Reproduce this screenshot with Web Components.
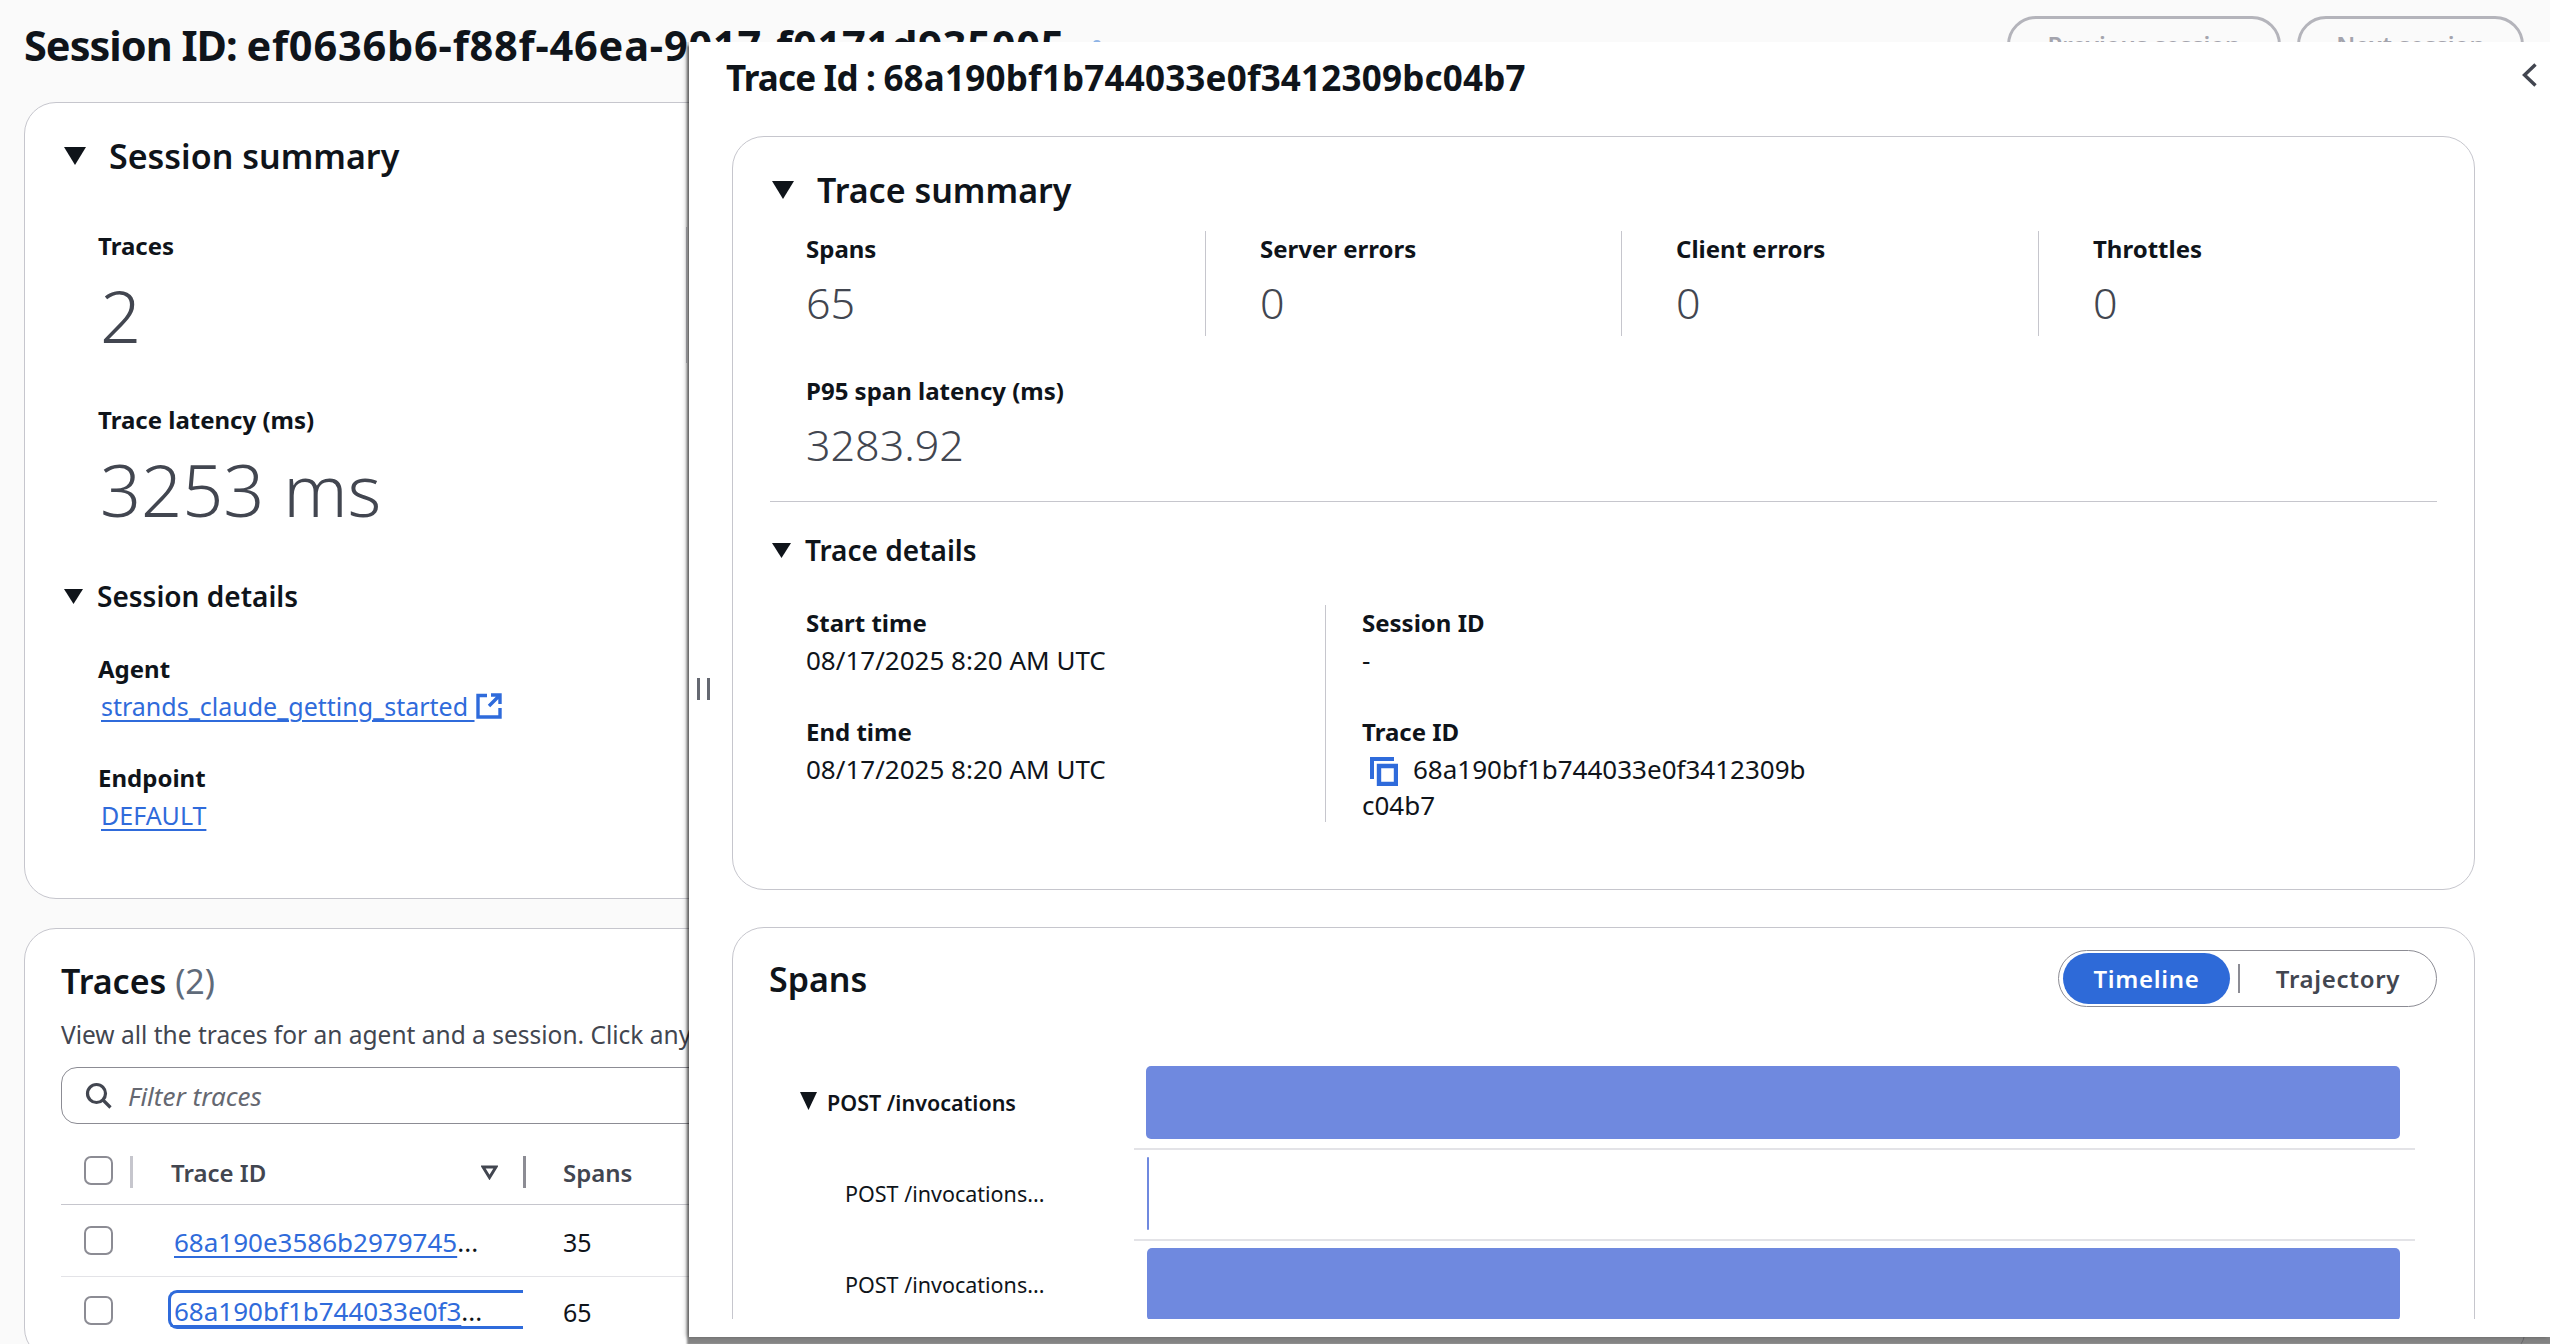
<!DOCTYPE html>
<html>
<head>
<meta charset="utf-8">
<title>Session</title>
<style>
    html, body { margin: 0; height: 100%; }
    body {
        width: 2550px;
        height: 1344px;
        overflow: hidden;
        position: relative;
        background: #fafafa;
        color: #0f141a;
        font-family: "Noto Sans", "Open Sans", sans-serif;
    }
    .stat-row { display: grid; grid-template-columns: 622px 1fr; }
    .stat-row i { display: block; margin: -3px 0 -6px; border-left: 1px solid #c6c6cd; }
</style>
</head>
<body>

<session-page>
    <session-header slot="header" label="Session ID: " value="ef0636b6-f88f-46ea-9017-f0171d935005"></session-header>

    <ui-card class="session">
        <fold-title size="lg">Session summary</fold-title>
        <div style="height:50px"></div>
        <div class="stat-row">
            <stat-item big>
                <span slot="label">Traces</span>
                2
            </stat-item>
            <i></i>
        </div>
        <div style="height:47px"></div>
        <stat-item big>
            <span slot="label">Trace latency (ms)</span>
            3253 ms
        </stat-item>
        <div style="height:45px"></div>
        <fold-title>Session details</fold-title>
        <div style="height:37px"></div>
        <kv-item indent="34">
            <span slot="label">Agent</span>
            <ui-link external>strands_claude_getting_started</ui-link>
        </kv-item>
        <div style="height:38px"></div>
        <kv-item indent="34">
            <span slot="label">Endpoint</span>
            <ui-link>DEFAULT</ui-link>
        </kv-item>
    </ui-card>

    <traces-panel></traces-panel>
</session-page>

<trace-drawer label="Trace Id : " value="68a190bf1b744033e0f3412309bc04b7">
    <trace-summary></trace-summary>
    <spans-panel></spans-panel>
</trace-drawer>

<script>
const triangle = `<svg viewBox="0 0 20 18" preserveAspectRatio="none" style="display:block;width:100%;height:100%"><path d="M0 0H20L10 18Z" fill="currentColor"/></svg>`;

class SessionPage extends HTMLElement {
    constructor() {
        super();
        this.attachShadow({ mode: 'open' });
        this.shadowRoot.innerHTML = `
            <style>
                :host { display: block; width: 2550px; height: 1344px; box-sizing: border-box; padding-left: 24px; overflow: hidden; }
                .stack { display: flex; flex-direction: column; gap: 29px; width: 2502px; }
            </style>
            <slot name="header"></slot>
            <div class="stack"><slot></slot></div>
        `;
    }
}

class SessionHeader extends HTMLElement {
    constructor() {
        super();
        this.attachShadow({ mode: 'open' });
        this.shadowRoot.innerHTML = `
            <style>
                :host { display: flex; height: 102px; padding-right: 26px; }
                h1 { margin: 21px 0 0; font-size: 41.5px; line-height: 48px; font-weight: 700; white-space: pre; letter-spacing: .8px; }
                h1 span { letter-spacing: -1px; }
                .info { width: 8px; height: 8px; border-radius: 50%; background: #8fb4e6; margin: 40px auto 0 28px; }
                .btns { display: flex; gap: 16px; padding-top: 16px; }
                button {
                    height: 58px; border: 3px solid #b4b4bb; border-radius: 30px; background: transparent;
                    color: #a4a4ad; font: 600 24px/32px "Noto Sans", sans-serif; padding: 0; box-sizing: border-box;
                }
                .prev { width: 274px; }
                .next { width: 227px; }
            </style>
            <h1><span>${this.getAttribute('label')}</span>${this.getAttribute('value')}</h1>
            <div class="info"></div>
            <div class="btns">
                <button class="prev">Previous session</button>
                <button class="next">Next session</button>
            </div>
        `;
    }
}

class UiCard extends HTMLElement {
    constructor() {
        super();
        this.attachShadow({ mode: 'open' });
        this.shadowRoot.innerHTML = `
            <style>
                :host {
                    display: block; box-sizing: border-box; background: #fff;
                    border: 1px solid #c6c6cd; border-radius: 32px;
                }
                :host(.session) { height: 797px; padding: 29px 39px 0; }
            </style>
            <slot></slot>
        `;
    }
}

class FoldTitle extends HTMLElement {
    constructor() {
        super();
        this.attachShadow({ mode: 'open' });
        this.shadowRoot.innerHTML = `
            <style>
                :host { display: flex; align-items: center; height: 40px; font-size: 28px; font-weight: 600; color: #0f141a; gap: 14px; }
                :host([size="lg"]) { height: 48px; font-size: 34px; gap: 23px; }
                i { display: block; width: 19px; height: 15px; }
                :host([size="lg"]) i { width: 22px; height: 18px; }
            </style>
            <i>${triangle}</i><span><slot></slot></span>
        `;
    }
}

class StatItem extends HTMLElement {
    constructor() {
        super();
        this.attachShadow({ mode: 'open' });
        this.shadowRoot.innerHTML = `
            <style>
                :host { display: block; padding-left: 34px; }
                :host([big]) .v { font-size: 72px; line-height: 84px; margin: 11px 0 0 2px; }
                :host([pad]) { padding-left: 0; }
                .l { font-size: 24px; line-height: 32px; font-weight: 700; color: #0f141a; }
                .v { font-size: 43px; line-height: 56px; margin-top: 10px; font-weight: 300; color: #424650; }
            </style>
            <div class="l"><slot name="label"></slot></div>
            <div class="v"><slot></slot></div>
        `;
    }
}

class KvItem extends HTMLElement {
    constructor() {
        super();
        this.attachShadow({ mode: 'open' });
        const indent = this.getAttribute('indent') || 0;
        this.shadowRoot.innerHTML = `
            <style>
                :host { display: block; padding-left: ${indent}px; font-size: 26px; }
                .l { font-size: 24px; line-height: 32px; font-weight: 700; }
                .v { line-height: 36px; margin-top: 3px; color: #0f141a; }
            </style>
            <div class="l"><slot name="label"></slot></div>
            <div class="v"><slot></slot></div>
        `;
    }
}

class UiLink extends HTMLElement {
    constructor() {
        super();
        this.attachShadow({ mode: 'open' });
        const ext = this.hasAttribute('external');
        this.shadowRoot.innerHTML = `
            <style>
                :host { display: inline-flex; align-items: center; margin-left: 3px; color: #2f6bdb; font-size: 25px; }
                a { color: inherit; text-decoration: underline; text-underline-offset: 4px; text-decoration-thickness: 2px; }
                svg { width: 26px; height: 26px; margin: 0 0 0 1px; }
            </style>
            <a href="#"><slot></slot>${ext ? '&nbsp;' : ''}</a>
            ${ext ? `<svg viewBox="0 0 26 26" fill="none" stroke="currentColor" stroke-width="3.4"><path d="M11 2.5H2V24H24V15"/><path d="M13 13L23.5 2.5M15 2H24V11"/></svg>` : ''}
        `;
    }
}

class TracesPanel extends HTMLElement {
    constructor() {
        super();
        this.attachShadow({ mode: 'open' });
        this.shadowRoot.innerHTML = `
            <style>
                :host { display: block; box-sizing: border-box; height: 432px; background: #fff; border: 1px solid #c6c6cd; border-radius: 32px; padding: 28px 36px 0; }
                h2 { margin: 0; font-size: 34px; line-height: 48px; font-weight: 600; }
                h2 span { font-weight: 400; color: #5f6b7a; }
                p { margin: 14px 0 16px; font-size: 24.5px; line-height: 32px; color: #424650; white-space: nowrap; }
                .filter {
                    display: flex; align-items: center; gap: 16px; box-sizing: border-box; height: 57px;
                    border: 1px solid #8c8c94; border-radius: 16px; padding-left: 23px;
                    font-size: 26px; font-style: italic; color: #656871;
                }
                .filter svg { width: 27px; height: 27px; }
                .row {
                    display: grid; grid-template-columns: 72px 393px 1fr; align-items: center;
                    box-sizing: border-box; font-size: 24px;
                }
                .head { height: 65px; margin-top: 16px; border-bottom: 1px solid #c6c6cd; font-weight: 600; color: #424650; }
                .r1 { height: 72px; border-bottom: 1px solid #e3e3e7; }
                .r2 { height: 66px; }
                .box { display: block; margin-left: 23px; width: 29px; height: 29px; box-sizing: border-box; border: 2px solid #8c8c94; border-radius: 7px; background: #fff; }
                .cell { display: flex; align-items: center; justify-content: space-between; box-sizing: border-box; padding-left: 38px; height: 32px; position: relative; }
                .head .c1 { border-right: 3px solid #c6c6cd; height: 32px; box-sizing: border-box; }
                .head .c2 { border-right: 3px solid #8c8c94; padding-right: 25px; }
                .sort { width: 17px; height: 15px; color: #424650; }
                .spans { padding: 3px 0 0 37px; font-size: 25px; color: #0f141a; }
                .head .spans { padding-top: 0; font-size: 24px; font-weight: 600; color: #424650; }
                .id { position: relative; padding: 2px 0 0 41px; font-size: 26px; white-space: nowrap; color: #0f141a; line-height: 34px; }
                .id a { color: #2f6bdb; text-underline-offset: 4px; text-decoration-thickness: 2px; }
                .focus::before {
                    content: ''; position: absolute; left: 35px; width: 355px; top: -2px; height: 39px; box-sizing: border-box;
                    border: 3px solid #2f6bdb; border-right: 0; border-radius: 9px 0 0 9px;
                }
            </style>
            <h2>Traces <span>(2)</span></h2>
            <p>View all the traces for an agent and a session. Click any trace to view its details and the spans inside it.</p>
            <div class="filter">
                <svg viewBox="0 0 27 27" fill="none" stroke="#424650" stroke-width="3.2"><circle cx="11.5" cy="11.5" r="9"/><path d="M18 18L25.5 25.5"/></svg>
                Filter traces
            </div>
            <div class="row head">
                <div class="c1"><span class="box"></span></div>
                <div class="cell c2">Trace ID <svg class="sort" viewBox="0 0 17 15" fill="none" stroke="currentColor" stroke-width="3"><path d="M2 2H15L8.5 12.5Z"/></svg></div>
                <div class="spans">Spans</div>
            </div>
            <div class="row r1">
                <div><span class="box"></span></div>
                <div class="id"><a href="#">68a190e3586b2979745</a>...</div>
                <div class="spans">35</div>
            </div>
            <div class="row r2">
                <div><span class="box"></span></div>
                <div class="id focus"><a href="#">68a190bf1b744033e0f3</a>...</div>
                <div class="spans">65</div>
            </div>
        `;
    }
}

class TraceDrawer extends HTMLElement {
    constructor() {
        super();
        this.attachShadow({ mode: 'open' });
        this.shadowRoot.innerHTML = `
            <style>
                :host {
                    position: absolute; left: 689px; top: 42px; right: 0; bottom: 7px; background: #fff;
                    display: flex; flex-direction: column;
                    box-shadow: 0 6px 2px 2px rgba(0,0,0,.48), -3px 0 4px rgba(0,0,0,.25);
                    clip-path: inset(0 0 -12px -12px);
                }
                h2 { margin: 12px 0 34px 37px; font-size: 35px; line-height: 48px; font-weight: 700; white-space: pre; letter-spacing: .2px; }
                h2 span { letter-spacing: -.8px; }
                .scroll { flex: 1; min-height: 0; overflow: hidden; margin-bottom: 18px; padding: 0 75px 0 43px; display: flex; flex-direction: column; gap: 37px; }
                .chev { position: absolute; right: 13px; top: 21px; width: 15px; height: 24px; }
                .handle { position: absolute; left: 8px; top: 636px; width: 13px; height: 22px; border-left: 3px solid #656871; border-right: 3px solid #656871; box-sizing: border-box; }
            </style>
            <h2><span>${this.getAttribute('label')}</span>${this.getAttribute('value')}</h2>
            <svg class="chev" viewBox="0 0 15 24" fill="none" stroke="#424650" stroke-width="3.4"><path d="M13.5 1.5L2.5 12L13.5 22.5"/></svg>
            <div class="handle"></div>
            <div class="scroll"><slot></slot></div>
        `;
    }
}

class TraceSummary extends HTMLElement {
    constructor() {
        super();
        this.attachShadow({ mode: 'open' });
        this.shadowRoot.innerHTML = `
            <style>
                :host { display: block; flex: none; box-sizing: border-box; height: 754px; background: #fff; border: 1px solid #c6c6cd; border-radius: 32px; padding: 29px 37px 0; }
                fold-title { margin-left: 2px; }
                .stats { display: grid; grid-template-columns: 435px 416px 417px 1fr; margin-top: 17px; }
                .stats > div { height: 105px; box-sizing: border-box; padding: 2px 0 0 54px; border-left: 1px solid #c6c6cd; }
                .stats > div:first-child { padding-left: 36px; border-left: 0; }
                .p95 { padding: 39px 0 28px 36px; border-bottom: 1px solid #c6c6cd; }
                .details { margin-top: 28px; }
                .kv { display: grid; grid-template-columns: 555px 1fr; margin-top: 35px; }
                .kv > div { display: flex; flex-direction: column; gap: 38px; padding: 2px 0 0 36px; box-sizing: border-box; height: 217px; }
                .kv > div + div { border-left: 1px solid #c6c6cd; width: 482px; }
                .wrap { word-break: break-all; }
                .wrap svg { width: 28px; height: 29px; vertical-align: -7px; margin: 0 15px 0 8px; }
            </style>
            <fold-title size="lg">Trace summary</fold-title>
            <div class="stats">
                <div><stat-item pad><span slot="label">Spans</span>65</stat-item></div>
                <div><stat-item pad><span slot="label">Server errors</span>0</stat-item></div>
                <div><stat-item pad><span slot="label">Client errors</span>0</stat-item></div>
                <div><stat-item pad><span slot="label">Throttles</span>0</stat-item></div>
            </div>
            <div class="p95"><stat-item pad><span slot="label">P95 span latency (ms)</span>3283.92</stat-item></div>
            <fold-title class="details">Trace details</fold-title>
            <div class="kv">
                <div>
                    <kv-item><span slot="label">Start time</span>08/17/2025 8:20 AM UTC</kv-item>
                    <kv-item><span slot="label">End time</span>08/17/2025 8:20 AM UTC</kv-item>
                </div>
                <div>
                    <kv-item><span slot="label">Session ID</span>-</kv-item>
                    <kv-item><span slot="label">Trace ID</span><span class="wrap"><svg viewBox="0 0 28 29" fill="none" stroke="#2f6bdb" stroke-width="4"><path d="M24 2H2V22"/><path d="M9 9H26V27H9Z" stroke-width="4.4"/></svg>68a190bf1b744033e0f3412309bc04b7</span></kv-item>
                </div>
            </div>
        `;
    }
}

class SpansPanel extends HTMLElement {
    constructor() {
        super();
        this.attachShadow({ mode: 'open' });
        this.shadowRoot.innerHTML = `
            <style>
                :host { display: block; flex: none; box-sizing: border-box; height: 600px; background: #fff; border: 1px solid #c6c6cd; border-radius: 32px; padding: 22px 37px 0 36px; }
                header { display: flex; justify-content: space-between; align-items: center; height: 57px; margin-bottom: 52px; }
                h2 { margin: 0; font-size: 34px; font-weight: 600; }
            </style>
            <header><h2>Spans</h2><seg-toggle></seg-toggle></header>
            <span-row root offset="12" width="1254">POST /invocations</span-row>
            <span-row offset="13" width="2">POST /invocations...</span-row>
            <span-row offset="13" width="1253">POST /invocations...</span-row>
        `;
    }
}

class SegToggle extends HTMLElement {
    constructor() {
        super();
        this.attachShadow({ mode: 'open' });
        this.shadowRoot.innerHTML = `
            <style>
                :host { display: flex; align-items: center; box-sizing: border-box; width: 379px; height: 57px; border: 1px solid #8c8c94; border-radius: 29px; padding: 0 4px; font-size: 24px; font-weight: 600; letter-spacing: .7px; }
                b { display: flex; align-items: center; justify-content: center; width: 167px; height: 51px; border-radius: 26px; background: #2e6ad8; color: #fff; font-weight: 600; }
                i { width: 2px; height: 29px; margin-left: 8px; background: #8c8c94; }
                span { flex: 1; text-align: center; color: #424650; padding-left: 4px; }
            </style>
            <b>Timeline</b><i></i><span>Trajectory</span>
        `;
    }
}

class SpanRow extends HTMLElement {
    constructor() {
        super();
        this.attachShadow({ mode: 'open' });
        const root = this.hasAttribute('root');
        this.shadowRoot.innerHTML = `
            <style>
                :host { display: grid; grid-template-columns: 365px 1281px; height: 91px; font-size: 21.5px; }
                .label { display: flex; align-items: center; gap: 10px; padding: 0 0 5px ${root ? 31 : 76}px; font-weight: ${root ? 600 : 400}; }
                .label i { display: block; width: 17px; height: 18px; margin-top: -2px; }
                .track { box-sizing: border-box; padding: 7px 0 9px; border-bottom: 2px solid #e3e3e7; }
                .bar { height: 73px; border-radius: 5px; background: #6f89df; margin-left: ${this.getAttribute('offset')}px; width: ${this.getAttribute('width')}px; }
            </style>
            <div class="label">${root ? `<i>${triangle}</i>` : ''}<span><slot></slot></span></div>
            <div class="track"><div class="bar"></div></div>
        `;
    }
}

customElements.define('session-page', SessionPage);
customElements.define('session-header', SessionHeader);
customElements.define('ui-card', UiCard);
customElements.define('fold-title', FoldTitle);
customElements.define('stat-item', StatItem);
customElements.define('kv-item', KvItem);
customElements.define('ui-link', UiLink);
customElements.define('traces-panel', TracesPanel);
customElements.define('trace-drawer', TraceDrawer);
customElements.define('trace-summary', TraceSummary);
customElements.define('spans-panel', SpansPanel);
customElements.define('seg-toggle', SegToggle);
customElements.define('span-row', SpanRow);
</script>
</body>
</html>
